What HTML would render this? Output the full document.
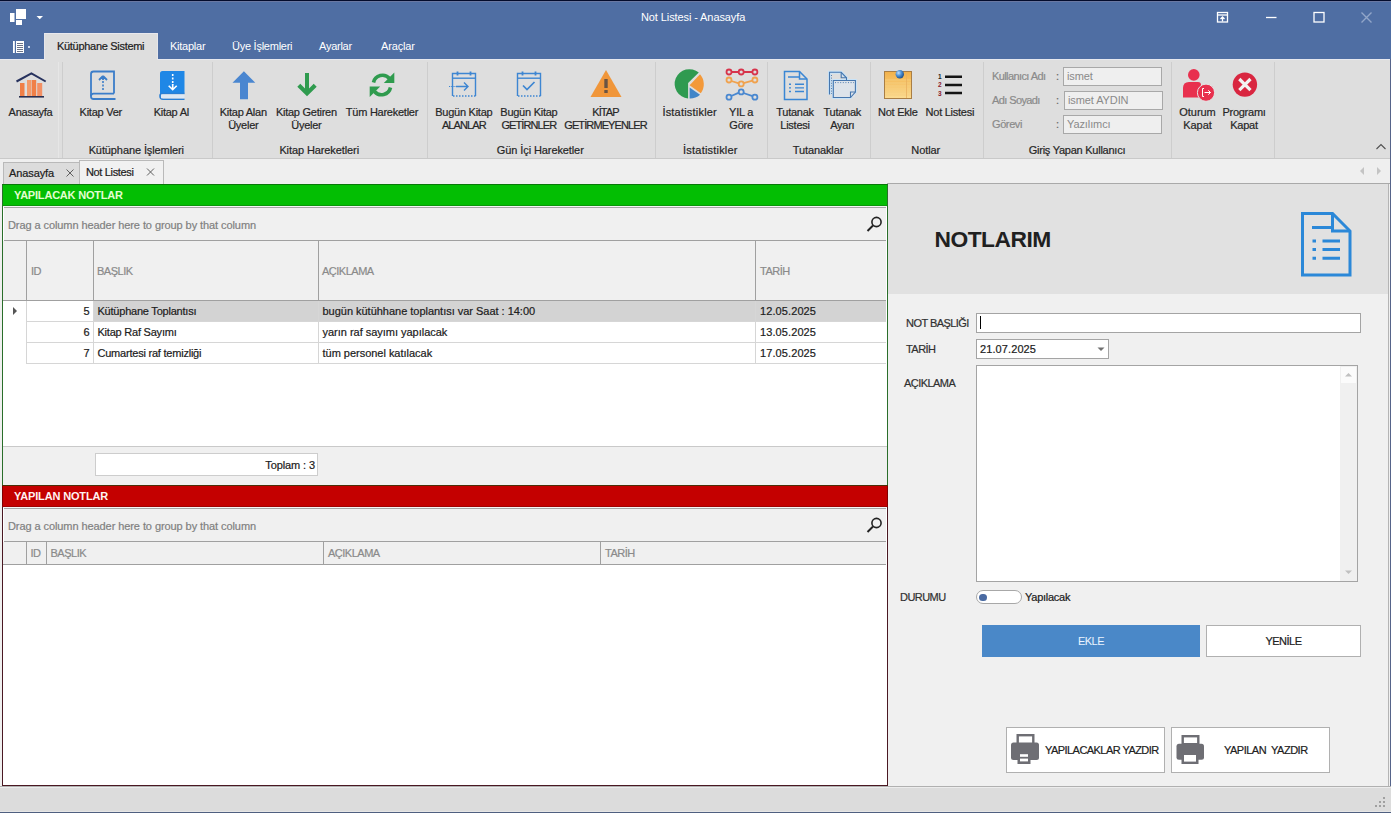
<!DOCTYPE html>
<html><head><meta charset="utf-8">
<style>
*{box-sizing:border-box;margin:0;padding:0}
html,body{width:1391px;height:813px;overflow:hidden;background:#f0f0f0;font-family:"Liberation Sans",sans-serif;font-size:11px;color:#202020}
.a{position:absolute}
.t{position:absolute;white-space:nowrap;line-height:13px;font-size:11px;letter-spacing:-0.2px;-webkit-text-stroke:0.2px currentColor}
.c{text-align:center}
.lb{position:absolute;width:120px;margin-left:-60px;text-align:center;white-space:nowrap;line-height:13px;font-size:11px;letter-spacing:-0.25px;color:#262626;-webkit-text-stroke:0.2px currentColor}
.cp{letter-spacing:-0.9px}
.hd{color:#8a8a8a;letter-spacing:-0.5px}
.lbl{color:#303030;letter-spacing:-0.55px}
.tb{background:#efefef;border:1px solid #a8a8a8;color:#8a8a8a;padding-left:3px;line-height:17px;white-space:nowrap;letter-spacing:-0.1px}
svg{position:absolute;overflow:visible}
</style></head><body>
<!-- top dark edge -->
<div class="a" style="left:0;top:0;width:1391px;height:1px;background:#040c2c"></div>
<div class="a" style="left:0;top:1px;width:1391px;height:1px;background:#6a78a2"></div>
<!-- title bar -->
<div class="a" style="left:0;top:2px;width:1391px;height:57px;background:#4f6ea3"></div>
<div class="t" style="left:641px;top:11px;color:#fff;-webkit-text-stroke:0;letter-spacing:-0.1px">Not Listesi - Anasayfa</div>
<svg style="left:0;top:0" width="1391" height="60">
 <!-- quick access icon -->
 <rect x="16" y="9" width="10" height="10" fill="#fff"/>
 <rect x="10" y="13" width="4.5" height="9" fill="#fff"/>
 <rect x="16" y="20" width="6" height="5" fill="#fff"/>
 <path d="M36.5 16h6.5l-3.25 3.2z" fill="#fff"/>
 <!-- page menu icon -->
 <rect x="13" y="41" width="1.8" height="12" fill="#fff"/>
 <rect x="16" y="41" width="8" height="12" fill="#fff"/>
 <g stroke="#6b7388" stroke-width="1"><path d="M17 43.5h6M17 45.5h6M17 47.5h6M17 49.5h6M17 51.5h6"/></g>
 <rect x="28" y="46" width="2" height="2" fill="#c8d4ea"/>
 <!-- window buttons -->
 <g fill="none" stroke="#fff" stroke-width="1.3">
  <rect x="1217.5" y="12.5" width="10" height="9.5"/>
  <path d="M1217.5 15h10"/>
  <path d="M1222.5 21.5v-4.5M1220.5 19l2-2 2 2"/>
  <path d="M1266 17.5h10.5"/>
  <rect x="1314" y="12.5" width="10" height="9.5"/>
 </g>
 <path d="M1361.5 12.5l10 10M1371.5 12.5l-10 10" stroke="#92a6c9" stroke-width="1.4"/>
</svg>

<!-- ribbon body -->
<div class="a" style="left:0;top:59px;width:1391px;height:100px;background:#dedede;border-top:1px solid #e7e8ee"></div>
<!-- active ribbon tab -->
<div class="a" style="left:44px;top:33px;width:114px;height:27px;background:#dedede;border-top:1px solid #e9e9ee;border-left:1px solid #e6e6ea;border-right:1px solid #e6e6ea"></div>
<div class="t" style="left:57px;top:40px;letter-spacing:-0.3px">Kütüphane Sistemi</div>
<div class="t" style="left:170px;top:40px;color:#fff;-webkit-text-stroke:0;letter-spacing:-0.25px">Kitaplar</div>
<div class="t" style="left:232px;top:40px;color:#fff;-webkit-text-stroke:0;letter-spacing:-0.25px">Üye İşlemleri</div>
<div class="t" style="left:319px;top:40px;color:#fff;-webkit-text-stroke:0;letter-spacing:-0.25px">Ayarlar</div>
<div class="t" style="left:381px;top:40px;color:#fff;-webkit-text-stroke:0;letter-spacing:-0.15px">Araçlar</div>

<!-- group separators -->
<div class="a" style="left:58px;top:62px;width:1px;height:96px;background:#e6e6e6"></div>
<div class="a" style="left:62px;top:62px;width:1px;height:96px;background:#cdcdcd"></div>
<div class="a" style="left:212px;top:62px;width:1px;height:96px;background:#cdcdcd"></div>
<div class="a" style="left:427px;top:62px;width:1px;height:96px;background:#cdcdcd"></div>
<div class="a" style="left:655px;top:62px;width:1px;height:96px;background:#cdcdcd"></div>
<div class="a" style="left:767px;top:62px;width:1px;height:96px;background:#cdcdcd"></div>
<div class="a" style="left:870px;top:62px;width:1px;height:96px;background:#cdcdcd"></div>
<div class="a" style="left:983px;top:62px;width:1px;height:96px;background:#cdcdcd"></div>
<div class="a" style="left:1171px;top:62px;width:1px;height:96px;background:#cdcdcd"></div>
<div class="a" style="left:1274px;top:62px;width:1px;height:96px;background:#cdcdcd"></div>

<!-- ribbon labels -->
<div class="lb" style="left:30.5px;top:106px">Anasayfa</div>
<div class="lb" style="left:100.8px;top:106px">Kitap Ver</div>
<div class="lb" style="left:171.3px;top:106px">Kitap Al</div>
<div class="lb" style="left:243.3px;top:106px">Kitap Alan<br>Üyeler</div>
<div class="lb" style="left:306.4px;top:106px">Kitap Getiren<br>Üyeler</div>
<div class="lb" style="left:382px;top:106px">Tüm Hareketler</div>
<div class="lb" style="left:463.8px;top:106px">Bugün Kitap<br><span class="cp">ALANLAR</span></div>
<div class="lb" style="left:528.9px;top:106px">Bugün Kitap<br><span class="cp">GETİRNLER</span></div>
<div class="lb" style="left:605.5px;top:106px"><span class="cp">KİTAP</span><br><span class="cp">GETİRMEYENLER</span></div>
<div class="lb" style="left:689.7px;top:106px;letter-spacing:0.2px">İstatistikler</div>
<div class="lb" style="left:741.1px;top:106px">YIL a<br>Göre</div>
<div class="lb" style="left:795px;top:106px">Tutanak<br>Listesi</div>
<div class="lb" style="left:842.3px;top:106px">Tutanak<br>Ayarı</div>
<div class="lb" style="left:897.8px;top:106px">Not Ekle</div>
<div class="lb" style="left:949.9px;top:106px">Not Listesi</div>
<div class="lb" style="left:1197.5px;top:106px;letter-spacing:-0.05px">Oturum<br>Kapat</div>
<div class="lb" style="left:1244px;top:106px">Programı<br>Kapat</div>

<div class="lb" style="left:136.3px;top:144px;letter-spacing:-0.1px">Kütüphane İşlemleri</div>
<div class="lb" style="left:319.2px;top:144px;letter-spacing:-0.1px">Kitap Hareketleri</div>
<div class="lb" style="left:540.3px;top:144px;letter-spacing:-0.1px">Gün İçi Hareketler</div>
<div class="lb" style="left:710.4px;top:144px;letter-spacing:0.2px">İstatistikler</div>
<div class="lb" style="left:818px;top:144px;letter-spacing:-0.1px">Tutanaklar</div>
<div class="lb" style="left:925.7px;top:144px;letter-spacing:-0.1px">Notlar</div>
<div class="lb" style="left:1077px;top:144px">Giriş Yapan Kullanıcı</div>

<!-- user info -->
<div class="t" style="left:992px;top:70px;color:#8a8a8a;letter-spacing:-0.6px">Kullanıcı Adı</div>
<div class="t" style="left:992px;top:94px;color:#8a8a8a;letter-spacing:-0.6px">Adı Soyadı</div>
<div class="t" style="left:992px;top:118px;color:#8a8a8a;letter-spacing:-0.4px">Görevi</div>
<div class="t" style="left:1056px;top:70px;color:#6a6a6a">:</div>
<div class="t" style="left:1056px;top:94px;color:#6a6a6a">:</div>
<div class="t" style="left:1056px;top:118px;color:#6a6a6a">:</div>
<div class="a tb" style="left:1063px;top:67px;width:99px;height:19px"><span>ismet</span></div>
<div class="a tb" style="left:1064px;top:91px;width:99px;height:19px"><span>ismet AYDIN</span></div>
<div class="a tb" style="left:1063px;top:115px;width:99px;height:19px"><span>Yazılımcı</span></div>
<svg style="left:0;top:0" width="1391" height="160">
 <path d="M1376.5 149l4.5-4.5 4.5 4.5" fill="none" stroke="#505050" stroke-width="1.1"/>
</svg>
<svg style="left:0;top:0" width="1391" height="160">
 <!-- Anasayfa -->
 <g fill="#f07f47">
  <rect x="20" y="83" width="4.5" height="13"/>
  <rect x="27" y="80" width="4.2" height="16" fill="#f39a6a"/>
  <rect x="31.7" y="80" width="4.5" height="16"/>
  <rect x="37.2" y="83" width="5" height="13" fill="#f39064"/>
 </g>
 <path d="M16.5 81.5L31.4 73.4L45.7 81.5" fill="none" stroke="#27325e" stroke-width="2"/>
 <path d="M19 96.8h25" stroke="#2a2f50" stroke-width="1.6"/>
 <!-- Kitap Ver -->
 <g fill="none" stroke="#3b7dc9" stroke-width="1.8">
  <path d="M114 93.6V71.5H93.5Q91 71.5 91 74V96.5Q91 99 93.5 99H115.5"/>
  <path d="M114 93.6H93.5Q91 93.6 91 96.3"/>
 </g>
 <path d="M103 76l-4 4M103 76l4 4M103 76v4" stroke="#3b7dc9" stroke-width="1.8" fill="none"/>
 <path d="M103 81v9" stroke="#3b7dc9" stroke-width="1.6" stroke-dasharray="2 1.5"/>
 <!-- Kitap Al -->
 <path d="M162.5 71h22v22.5h-20Q160 93.5 160 96V73.5Q160 71 162.5 71z" fill="#1f87e6"/>
 <path d="M160 96Q160 93.5 162.5 93.5H184.5M160 96Q160 99.2 163 99.2H184.5" fill="none" stroke="#2a7fd4" stroke-width="1.6"/>
 <rect x="161" y="94.5" width="23.5" height="3.8" fill="#dde8f4"/>
 <path d="M172.7 74v11" stroke="#fff" stroke-width="1.6" stroke-dasharray="2 1.5"/>
 <path d="M168.7 85.7l4 4 4-4M172.7 84v5.5" fill="none" stroke="#fff" stroke-width="1.6"/>
 <!-- up arrow -->
 <path d="M243.9 71.2L255.3 82.8H248V99.2H240V82.8H232.5z" fill="#4a86d0"/>
 <!-- down arrow green -->
 <path d="M307 73V93" stroke="#2f9b4e" stroke-width="4"/>
 <path d="M298.8 85.2L307 93.4L315.2 85.2" fill="none" stroke="#2f9b4e" stroke-width="4.2"/>
 <!-- refresh -->
 <g fill="none" stroke="#2f9b4e" stroke-width="3.6">
  <path d="M373.5 82.5A9.2 9.2 0 0 1 389.5 78.5"/>
  <path d="M390.5 87.5A9.2 9.2 0 0 1 374.5 91.5"/>
 </g>
 <path d="M394.3 72.5v10.5h-10.5z" fill="#2f9b4e"/>
 <path d="M369.7 97v-10.5h10.5z" fill="#2f9b4e"/>
 <!-- calendar 1 -->
 <g fill="none" stroke="#3e86d2" stroke-width="1.4">
  <path d="M452.5 96V73.5H475.5V96"/>
  <path d="M452.5 78.2H475.5"/>
  <path d="M457.5 71.5v4M470.5 71.5v4" stroke-width="1.8"/>
  <path d="M456 86.5h12M464 82.5l4 4-4 4"/>
  <path d="M449 86.5h7" stroke-dasharray="1.2 1" stroke-width="1.1"/>
 </g>
 <path d="M453 96h23" stroke="#3e86d2" stroke-width="1.3" stroke-dasharray="1.5 1.5"/>
 <!-- calendar 2 -->
 <g fill="none" stroke="#3e86d2" stroke-width="1.4">
  <path d="M517.5 96V73.5H540.5V96"/>
  <path d="M517.5 78.2H540.5"/>
  <path d="M522.5 71.5v4M535.5 71.5v4" stroke-width="1.8"/>
  <path d="M523 85.5l4 4 7.5-7.5" stroke-width="1.7"/>
 </g>
 <path d="M518 96h23" stroke="#3e86d2" stroke-width="1.3" stroke-dasharray="1.5 1.5"/>
 <!-- warning -->
 <path d="M606 70L621.5 97H590.5z" fill="#f0963a"/>
 <rect x="604.3" y="79" width="3.4" height="9" fill="#6a5444"/>
 <rect x="604.3" y="90" width="3.4" height="3" fill="#6a5444"/>
 <!-- pie -->
 <path d="M688.1 83L698.8 72.6A14.7 14.7 0 1 0 688.1 98.5z" fill="#2f9a50"/>
 <path d="M689.6 85.2L700 74.2A15 15 0 0 1 700.8 93.2z" fill="#f3993a"/>
 <path d="M689.6 87.4L700 94.8A14.8 14.8 0 0 1 689.6 98.6z" fill="#4185c8"/>
 <!-- lines chart -->
 <g fill="none" stroke-width="1.8">
  <path d="M731.5 72h7.2M743.7 72h8.7" stroke="#d7344c"/>
  <circle cx="729" cy="72" r="2.5" stroke="#d7344c"/><circle cx="741.2" cy="72" r="2.5" stroke="#d7344c"/><circle cx="754.9" cy="72" r="2.5" stroke="#d7344c"/>
  <path d="M731.3 81l7.6 2.4M743.5 83.2l9.1-2.6" stroke="#f0a24e"/>
  <circle cx="729" cy="80" r="2.5" stroke="#f0a24e"/><circle cx="741.2" cy="83.9" r="2.5" stroke="#f0a24e"/><circle cx="754.9" cy="80" r="2.5" stroke="#f0a24e"/>
  <path d="M731.2 96l7.8-3.4M743.4 93l9.2 3.2" stroke="#4a88d0"/>
  <circle cx="729" cy="97.2" r="2.5" stroke="#4a88d0"/><circle cx="741.2" cy="91.9" r="2.5" stroke="#4a88d0"/><circle cx="754.9" cy="97.2" r="2.5" stroke="#4a88d0"/>
 </g>
 <!-- tutanak listesi -->
 <g fill="none" stroke="#3a86d4" stroke-width="1.5">
  <path d="M784.5 71.5H799.5L807 79V99.5H784.5z"/>
  <path d="M799.5 71.5V79H807"/>
  <path d="M788 77h11"/>
  <path d="M795 84.3h9M795 87.9h9M795 91.5h9" stroke-width="1.4"/>
  <path d="M789 84.3h2M789 87.9h2M789 91.5h2" stroke-width="1.4"/>
 </g>
 <!-- tutanak ayari -->
 <g fill="none" stroke="#c9e3f8" stroke-width="3"><path d="M829.5 94.5V72.3H841.2L846.5 77.8V80.5M833.3 80.5H855.4V92L850.5 97.5H833.3z"/></g>
 <rect x="834" y="81" width="21" height="16" fill="#dde3ea"/>
 <g fill="none" stroke="#4676ad" stroke-width="1.1">
  <path d="M829.5 94.5V72.3H841.2L846.5 77.8V80.5"/>
  <path d="M841.2 72.3V77.8H846.5"/>
  <path d="M833.3 80.5H855.4V92L850.5 97.5H833.3z"/>
  <path d="M850.5 97.5V92H855.4"/>
 </g>
 <path d="M831.5 75v19" stroke="#4676ad" stroke-width="0.9" stroke-dasharray="1 1.6"/>
 <path d="M835 82.6h19" stroke="#4676ad" stroke-width="0.9" stroke-dasharray="1 1.6"/>
 <!-- not ekle -->
 <defs>
  <linearGradient id="ny" x1="0" y1="0" x2="0" y2="1"><stop offset="0" stop-color="#f2b14a"/><stop offset="1" stop-color="#fbdc92"/></linearGradient>
  <radialGradient id="pin" cx="0.35" cy="0.35" r="0.7"><stop offset="0" stop-color="#bfe0ff"/><stop offset="0.5" stop-color="#4b8fd4"/><stop offset="1" stop-color="#1d4d86"/></radialGradient>
 </defs>
 <rect x="884.5" y="71.5" width="27" height="27" fill="url(#ny)" stroke="#a97e45" stroke-width="1"/>
 <g stroke="#f6cf80" stroke-width="0.8"><path d="M885 80h26M885 83h26M885 86h26M885 89h26M885 92h26M885 95h26"/></g>
 <path d="M906.5 72v26" stroke="#e8b060" stroke-width="0.8"/>
 <circle cx="899.8" cy="74.2" r="4.2" fill="url(#pin)"/>
 <!-- not listesi -->
 <g font-family="Liberation Sans" font-weight="bold" font-size="6.5">
  <text x="938" y="79" fill="#222">1</text>
  <text x="938" y="87.3" fill="#8a1a2a">2</text>
  <text x="938" y="95.5" fill="#8a1a2a">3</text>
 </g>
 <g stroke="#141414" stroke-width="2.4"><path d="M945 76.8h17M945 85h17M945 93h17"/></g>
 <!-- oturum kapat -->
 <g fill="#e8304e">
  <circle cx="1193.8" cy="74.9" r="5.8"/>
  <path d="M1183 97.6V88Q1183 82 1189 82H1198Q1201 82 1201 85V97.6z"/>
  <circle cx="1206" cy="92.7" r="8.6" stroke="#e6e6e6" stroke-width="1"/>
 </g>
 <path d="M1204 88.5h-1.5v8h1.5M1204.5 92.5h6M1208.3 90.3l2.2 2.2-2.2 2.2" fill="none" stroke="#fff" stroke-width="1"/>
 <!-- programi kapat -->
 <circle cx="1244.9" cy="84.6" r="12.2" fill="#d92640"/>
 <path d="M1239.3 79l11.2 11.2M1250.5 79l-11.2 11.2" stroke="#f2f2f2" stroke-width="3.2"/>
</svg>
<!-- page tab strip -->
<div class="a" style="left:0;top:158px;width:1391px;height:1px;background:#c9c9c9"></div>
<div class="a" style="left:0;top:159px;width:1391px;height:24px;background:#efefef"></div>
<div class="a" style="left:3px;top:162px;width:77px;height:22px;background:#dcdcdc;border:1px solid #b9b9b9;border-bottom:none"></div>
<div class="a" style="left:79px;top:160px;width:85px;height:24px;background:#f1f1f1;border:1px solid #b9b9b9;border-bottom:none"></div>
<div class="t" style="left:9px;top:167px;letter-spacing:-0.1px">Anasayfa</div>
<div class="t" style="left:86px;top:166px;letter-spacing:-0.35px">Not Listesi</div>
<svg style="left:0;top:0" width="1391" height="190">
 <path d="M66.5 169.5l7 7M73.5 169.5l-7 7" stroke="#606060" stroke-width="1"/>
 <path d="M147 168.5l7 7M154 168.5l-7 7" stroke="#606060" stroke-width="1"/>
 <path d="M1364 167v8l-4-4z" fill="#c4c4c4"/>
 <path d="M1377 167v8l4-4z" fill="#c4c4c4"/>
</svg>

<!-- main frame top line -->
<div class="a" style="left:887px;top:183px;width:504px;height:1px;background:#a9a9a9"></div>

<!-- ===== LEFT PANEL 1 (YAPILACAK) ===== -->
<div class="a" style="left:2px;top:184px;width:886px;height:301px;border:1px solid #2a6e2a;border-top:none;border-bottom:none;background:#fff"></div>
<div class="a" style="left:2px;top:184px;width:886px;height:22px;background:#03be03;border-top:1px solid #087808;border-bottom:1px solid #0a960a;border-left:1px solid #2a6e2a;border-right:1px solid #2a6e2a"></div>
<div class="t" style="left:14px;top:189px;font-weight:bold;color:#e2fdd0;-webkit-text-stroke:0;letter-spacing:-0.2px">YAPILACAK NOTLAR</div>
<!-- group panel -->
<div class="a" style="left:3px;top:206px;width:884px;height:1px;background:#f4f4f4"></div>
<div class="a" style="left:4px;top:207px;width:882px;height:34px;background:#f0f0f0;border-top:1px solid #a6a6a6;border-bottom:1px solid #a0a0a0"></div>
<div class="t" style="left:8px;top:218.5px;color:#808080;letter-spacing:-0.08px">Drag a column header here to group by that column</div>
<svg style="left:0;top:0" width="900" height="560">
 <circle cx="876.5" cy="222" r="4.6" fill="none" stroke="#222" stroke-width="1.6"/>
 <path d="M873 225.5l-5.5 5.5" stroke="#222" stroke-width="2"/>
</svg>
<!-- column header -->
<div class="a" style="left:3px;top:241px;width:883px;height:59px;background:#f0f0f0"></div>
<div class="a" style="left:3px;top:300px;width:883px;height:1px;background:#a0a0a0"></div>
<div class="a" style="left:26px;top:241px;width:1px;height:59px;background:#a0a0a0"></div>
<div class="a" style="left:93px;top:241px;width:1px;height:59px;background:#a0a0a0"></div>
<div class="a" style="left:318px;top:241px;width:1px;height:59px;background:#a0a0a0"></div>
<div class="a" style="left:755px;top:241px;width:1px;height:59px;background:#a0a0a0"></div>
<div class="t hd" style="left:31px;top:265px">ID</div>
<div class="t hd" style="left:97px;top:265px">BAŞLIK</div>
<div class="t hd" style="left:322px;top:265px">AÇIKLAMA</div>
<div class="t hd" style="left:760px;top:265px">TARİH</div>
<!-- rows -->
<div class="a" style="left:94px;top:301px;width:792px;height:20px;background:#d3d3d3"></div>
<div class="a" style="left:26px;top:321px;width:860px;height:1px;background:#d6d6d6"></div>
<div class="a" style="left:26px;top:342px;width:860px;height:1px;background:#d6d6d6"></div>
<div class="a" style="left:26px;top:363px;width:860px;height:1px;background:#d6d6d6"></div>
<div class="a" style="left:26px;top:301px;width:1px;height:62px;background:#d6d6d6"></div>
<div class="a" style="left:93px;top:301px;width:1px;height:62px;background:#d6d6d6"></div>
<div class="a" style="left:318px;top:301px;width:1px;height:62px;background:#d6d6d6"></div>
<div class="a" style="left:755px;top:301px;width:1px;height:62px;background:#d6d6d6"></div>
<svg style="left:0;top:0" width="40" height="330"><path d="M13 307v8l4-4z" fill="#555"/></svg>
<div class="t" style="left:40px;width:49.5px;text-align:right;top:304.5px">5</div>
<div class="t" style="left:40px;width:49.5px;text-align:right;top:325.5px">6</div>
<div class="t" style="left:40px;width:49.5px;text-align:right;top:346.5px">7</div>
<div class="t" style="left:97.5px;top:304.5px;letter-spacing:-0.22px">Kütüphane Toplantısı</div>
<div class="t" style="left:97.5px;top:325.5px;letter-spacing:-0.22px">Kitap Raf Sayımı</div>
<div class="t" style="left:97.5px;top:346.5px;letter-spacing:-0.22px">Cumartesi raf temizliği</div>
<div class="t" style="left:322.5px;top:304.5px;letter-spacing:-0.02px">bugün kütühhane toplantısı var Saat : 14:00</div>
<div class="t" style="left:322.5px;top:325.5px;letter-spacing:-0.02px">yarın raf sayımı yapılacak</div>
<div class="t" style="left:322.5px;top:346.5px;letter-spacing:-0.02px">tüm personel katılacak</div>
<div class="t" style="left:760px;top:304.5px;letter-spacing:0.1px">12.05.2025</div>
<div class="t" style="left:760px;top:325.5px;letter-spacing:0.1px">13.05.2025</div>
<div class="t" style="left:760px;top:346.5px;letter-spacing:0.1px">17.05.2025</div>
<!-- footer -->
<div class="a" style="left:3px;top:446px;width:884px;height:39px;background:#f0f0f0;border-top:1px solid #c9c9c9"></div>
<div class="a" style="left:95px;top:453px;width:223px;height:23px;background:#fff;border:1px solid #cdcdcd"></div>
<div class="t" style="left:200px;width:115px;text-align:right;top:458.5px;letter-spacing:-0.1px">Toplam : 3</div>

<!-- ===== LEFT PANEL 2 (YAPILAN) ===== -->
<div class="a" style="left:2px;top:485px;width:886px;height:301px;border:1px solid #4a1822;border-top:none;background:#fff"></div>
<div class="a" style="left:2px;top:485px;width:886px;height:1px;background:#4a3008"></div>
<div class="a" style="left:2px;top:486px;width:886px;height:21px;background:#c40000;border-left:1px solid #800000;border-right:1px solid #800000;border-bottom:1px solid #a00000"></div>
<div class="t" style="left:14px;top:490px;font-weight:bold;color:#fff2f2;-webkit-text-stroke:0;letter-spacing:-0.15px">YAPILAN NOTLAR</div>
<div class="a" style="left:3px;top:507px;width:884px;height:1px;background:#f4f4f4"></div>
<div class="a" style="left:4px;top:508px;width:882px;height:34px;background:#f0f0f0;border-top:1px solid #a6a6a6;border-bottom:1px solid #a0a0a0"></div>
<div class="t" style="left:8px;top:519.5px;color:#808080;letter-spacing:-0.08px">Drag a column header here to group by that column</div>
<svg style="left:0;top:0" width="900" height="560">
 <circle cx="876.5" cy="523" r="4.6" fill="none" stroke="#222" stroke-width="1.6"/>
 <path d="M873 526.5l-5.5 5.5" stroke="#222" stroke-width="2"/>
</svg>
<div class="a" style="left:3px;top:542px;width:883px;height:22px;background:#f0f0f0"></div>
<div class="a" style="left:3px;top:564px;width:883px;height:1px;background:#a0a0a0"></div>
<div class="a" style="left:26px;top:542px;width:1px;height:22px;background:#a0a0a0"></div>
<div class="a" style="left:46px;top:542px;width:1px;height:22px;background:#a0a0a0"></div>
<div class="a" style="left:323px;top:542px;width:1px;height:22px;background:#a0a0a0"></div>
<div class="a" style="left:600px;top:542px;width:1px;height:22px;background:#a0a0a0"></div>
<div class="t hd" style="left:30.5px;top:547px">ID</div>
<div class="t hd" style="left:50.5px;top:547px">BAŞLIK</div>
<div class="t hd" style="left:328px;top:547px">AÇIKLAMA</div>
<div class="t hd" style="left:605px;top:547px">TARİH</div>

<!-- ===== RIGHT PANEL ===== -->
<div class="a" style="left:888px;top:184px;width:500px;height:602px;background:#f0f0f0"></div>
<div class="a" style="left:888px;top:184px;width:500px;height:110px;background:#e1e1e1"></div>
<div class="a" style="left:1388px;top:184px;width:1px;height:602px;background:#b4b4b4"></div>
<div class="t" style="left:934.5px;top:226.3px;font-size:22.8px;line-height:26px;font-weight:bold;letter-spacing:-0.5px;color:#202020;-webkit-text-stroke:0">NOTLARIM</div>
<svg style="left:0;top:0" width="1391" height="813">
 <g fill="none" stroke="#2b88d8" stroke-width="3">
  <path d="M1302.5 213.5H1332.5L1350 231V275H1302.5z"/>
  <path d="M1332.5 213.5V231H1350"/>
  <path d="M1312 227.5h21"/>
  <path d="M1322.5 241h17.5M1322.5 249.6h17.5M1322.5 258.2h17.5"/>
  <path d="M1312.5 241h3.5M1312.5 249.6h3.5M1312.5 258.2h3.5"/>
 </g>
</svg>
<div class="t lbl" style="left:906px;top:317px">NOT BAŞLIĞI</div>
<div class="t lbl" style="left:906px;top:343px">TARİH</div>
<div class="t lbl" style="left:904px;top:377px">AÇIKLAMA</div>
<div class="t lbl" style="left:900px;top:591px">DURUMU</div>
<div class="a" style="left:976px;top:313px;width:385px;height:20px;background:#fff;border:1px solid #a4a4a4"></div>
<div class="a" style="left:980px;top:316px;width:1px;height:13px;background:#000"></div>
<div class="a" style="left:976px;top:339px;width:133px;height:20px;background:#fff;border:1px solid #a4a4a4"></div>
<div class="t" style="left:980px;top:342.5px;letter-spacing:0.1px">21.07.2025</div>
<svg style="left:0;top:0" width="1391" height="813">
 <path d="M1097.5 347.5h7l-3.5 3.5z" fill="#707070"/>
</svg>
<div class="a" style="left:976px;top:365px;width:382px;height:217px;background:#fff;border:1px solid #a4a4a4"></div>
<div class="a" style="left:1340px;top:366px;width:17px;height:215px;background:#f0f0f0"></div>
<div class="a" style="left:1341px;top:367px;width:15px;height:16px;background:#fbfbfb"></div>
<svg style="left:0;top:0" width="1391" height="813">
 <path d="M1345 376.5h7l-3.5-3.5z" fill="#c0c0c0"/>
 <path d="M1345 570.5h7l-3.5 3.5z" fill="#c0c0c0"/>
</svg>
<div class="a" style="left:976px;top:590px;width:46px;height:14px;background:#fff;border:1px solid #a8a8a8;border-radius:7px"></div>
<div class="a" style="left:979.3px;top:593.5px;width:7.4px;height:7.4px;background:#4a6aa2;border-radius:50%"></div>
<div class="t" style="left:1025px;top:591px;letter-spacing:-0.25px">Yapılacak</div>
<div class="a" style="left:982px;top:625px;width:218px;height:32px;background:#4a88c8"></div>
<div class="t c" style="left:982px;width:218px;top:635px;color:#eaf4ff;-webkit-text-stroke:0;letter-spacing:-0.5px">EKLE</div>
<div class="a" style="left:1206px;top:625px;width:155px;height:32px;background:#fff;border:1px solid #b0b0b0"></div>
<div class="t c" style="left:1206px;width:155px;top:635px;letter-spacing:-0.5px">YENİLE</div>
<div class="a" style="left:1006px;top:727px;width:159px;height:46px;background:#fff;border:1px solid #b0b0b0"></div>
<div class="a" style="left:1171px;top:727px;width:159px;height:46px;background:#fff;border:1px solid #b0b0b0"></div>
<div class="t" style="left:1045px;top:744px;letter-spacing:-0.55px">YAPILACAKLAR YAZDIR</div>
<div class="t" style="left:1224px;top:744px;letter-spacing:-0.5px">YAPILAN&nbsp; YAZDIR</div>
<svg style="left:0;top:0" width="1391" height="813">
 <g fill="none" stroke="#6e6e74" stroke-width="2.4"><rect x="1017.7" y="735.2" width="15.6" height="9"/><rect x="1182.7" y="736.2" width="15.6" height="8"/></g>
 <g fill="#6e6e74">
  <rect x="1011" y="742.5" width="28" height="17.5" rx="2.5"/>
  <rect x="1017.5" y="751.5" width="13" height="12.5"/>
  <rect x="1176.5" y="743.8" width="27.5" height="16" rx="2.5"/>
  <rect x="1181.5" y="752.5" width="17" height="11.5"/>
 </g>
 <g fill="#fff"><rect x="1020" y="754.2" width="8" height="2.6"/><rect x="1020" y="758.6" width="8" height="2.8"/><rect x="1184" y="755" width="12" height="6.6"/></g>
</svg>

<!-- window right border -->
<div class="a" style="left:1390px;top:59px;width:1px;height:754px;background:#56648a"></div>
<!-- status bar -->
<div class="a" style="left:0;top:786px;width:1391px;height:1px;background:#b0b0b0"></div>
<div class="a" style="left:0;top:787px;width:1391px;height:25px;background:#dcdcdc;border-top:1px solid #ececec;border-bottom:1px solid #e6e6e6"></div>
<div class="a" style="left:0;top:812px;width:1391px;height:1px;background:#4f5f80"></div>
<svg style="left:0;top:0" width="1391" height="813">
 <g fill="#a0a0a0">
  <rect x="1383" y="797" width="2" height="2"/>
  <rect x="1379" y="801" width="2" height="2"/><rect x="1383" y="801" width="2" height="2"/>
  <rect x="1375" y="805" width="2" height="2"/><rect x="1379" y="805" width="2" height="2"/><rect x="1383" y="805" width="2" height="2"/>
 </g>
</svg>
</body></html>
